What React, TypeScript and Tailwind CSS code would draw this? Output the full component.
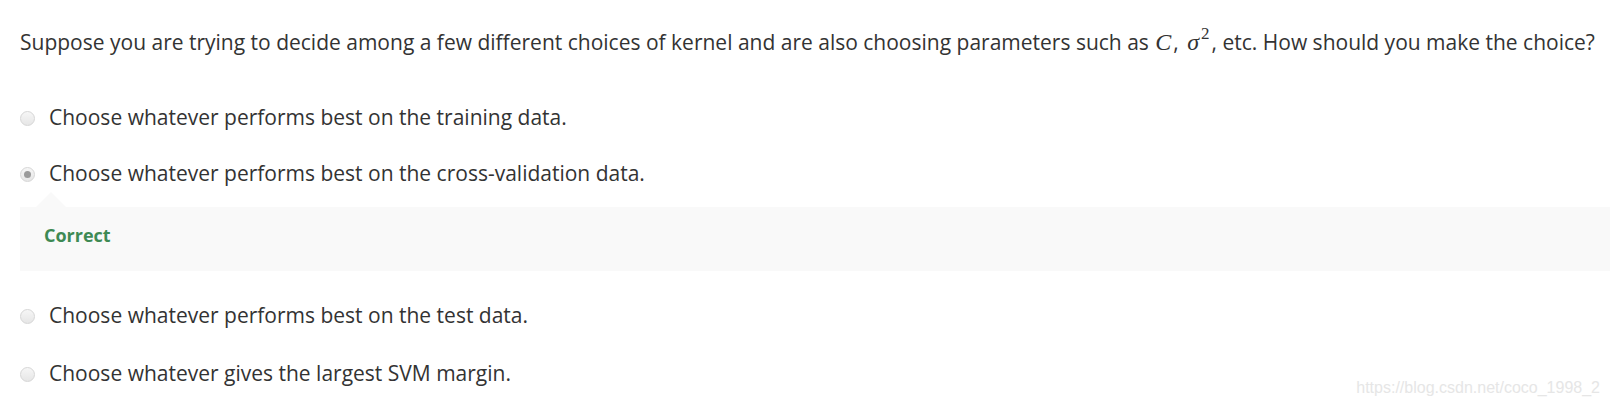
import React from 'react';

type Option = { id: string; label: string; selected?: boolean };

const options: Option[] = [
  { id: 'a', label: 'Choose whatever performs best on the training data.' },
  { id: 'b', label: 'Choose whatever performs best on the cross-validation data.', selected: true },
  { id: 'c', label: 'Choose whatever performs best on the test data.' },
  { id: 'd', label: 'Choose whatever gives the largest SVM margin.' },
];

function Radio({ selected }: { selected?: boolean }) {
  return (
    <span className="flex h-[15px] w-[15px] shrink-0 items-center justify-center rounded-full border border-[#d6d6d6] bg-gradient-to-b from-[#f6f6f6] to-[#e6e6e6]">
      {selected && <span className="h-[7px] w-[7px] rounded-full bg-[#9a9a9a]" />}
    </span>
  );
}

export default function App() {
  return (
    <div className="relative h-[406px] w-[1610px] overflow-hidden bg-white font-['Open_Sans',sans-serif] text-[#333]">
      <p className="whitespace-nowrap pl-[20px] pt-[27px] text-[21px] leading-[30px]">
        Suppose you are trying to decide among a few different choices of kernel and are also choosing parameters such as{' '}
        <span className="ml-[1px] mr-[2px] font-['Liberation_Serif',serif] text-[24px] italic">C</span>,{' '}
        <span className="ml-[3px] font-['Liberation_Serif',serif] text-[24px] italic">σ</span>
        <span className="relative -top-[11px] ml-[2px] mr-[2px] font-['Liberation_Serif',serif] text-[17px]">2</span>, etc. How should you make the choice?
      </p>

      <div className="mt-[43px] flex flex-col">
        {options.map((o, i) => (
          <div key={o.id}>
            <label className="flex h-[30px] items-center gap-[14px] pl-[20px] text-[21px]">
              <Radio selected={o.selected} />
              <span>{o.label}</span>
            </label>
            {o.selected ? (
              <div className="mt-[18px] mb-[30px] pl-[20px]">
                <div className="relative h-[64px] bg-[#f9f9f9] px-[24px] pt-[14px]">
                  <span className="absolute -top-[15px] left-[16px] h-0 w-0 border-x-[15px] border-b-[15px] border-x-transparent border-b-[#f9f9f9]" />
                  <span className="text-[18px] font-bold leading-[28px] text-[#3e8a54]">Correct</span>
                </div>
              </div>
            ) : i < options.length - 1 ? (
              <div className={i === 0 ? 'h-[26px]' : 'h-[28px]'} />
            ) : null}
          </div>
        ))}
      </div>

      <span className="absolute right-[10px] top-[379px] font-['Liberation_Sans',sans-serif] text-[16px] leading-[18px] text-[#e6e6e6]">
        https://blog.csdn.net/coco_1998_2
      </span>
    </div>
  );
}
